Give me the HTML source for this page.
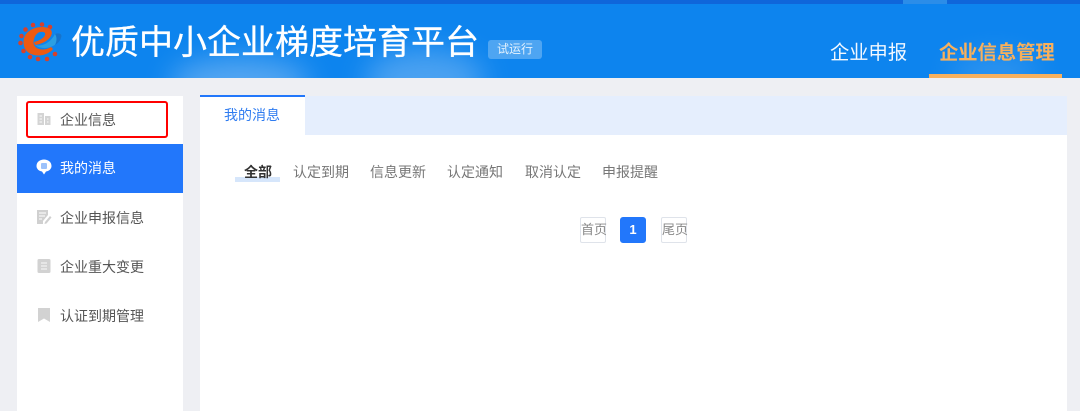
<!DOCTYPE html>
<html lang="zh">
<head>
<meta charset="utf-8">
<title>优质中小企业梯度培育平台</title>
<style>
html,body{margin:0;padding:0}
body{width:1080px;height:411px;position:relative;overflow:hidden;background:#eeeff3;font-family:"Liberation Sans","Noto Sans CJK SC",sans-serif;color:#555}
#root{position:absolute;left:0;top:0;width:1080px;height:411px;filter:blur(.35px)}
.a{position:absolute;white-space:nowrap}
#hd{position:absolute;left:0;top:0;width:1080px;height:78px;background:#0d84ee;overflow:hidden}
#top{position:absolute;left:0;top:0;width:1080px;height:4px;background:#0f66da}
.cloud{position:absolute;border-radius:50%;background:#6db2f3;filter:blur(14px)}
.side{font-size:14px;line-height:20px;left:60px;color:#555}
.ic{position:absolute;left:36px}
.tab{font-size:14px;line-height:20px;top:162px;color:#777}
.pg{position:absolute;top:217px;width:26px;height:26px;box-sizing:border-box;border:1px solid #dfe3ea;border-radius:2px;font-size:13px;line-height:24px;text-align:center;color:#888;background:#fff;white-space:nowrap}
</style>
</head>
<body>
<div id="root">
<div id="hd">
  <div class="cloud" style="left:170px;top:58px;width:140px;height:50px;opacity:.75"></div>
  <div class="cloud" style="left:365px;top:50px;width:120px;height:60px;opacity:.65"></div>
  <div class="cloud" style="left:950px;top:55px;width:90px;height:36px;opacity:.35"></div>
  <div id="top"></div>
  <div class="a" style="left:903px;top:0;width:44px;height:4px;background:#2b8de8"></div>
  <svg class="a" style="left:18px;top:22px" width="46" height="40" viewBox="0 0 46 40">
    <g fill="#d6412b">
      <circle cx="15" cy="3" r="2.300"/><circle cx="24" cy="2.500" r="2.300"/><circle cx="32" cy="5" r="2.300"/><circle cx="7.500" cy="7.500" r="2.300"/>
      <circle cx="3.500" cy="14" r="2.300"/><circle cx="2.500" cy="21" r="2.300"/><circle cx="5.500" cy="29" r="2.300"/><circle cx="12" cy="35" r="2.300"/>
      <circle cx="20" cy="37" r="2.300"/><circle cx="29" cy="37" r="2.300"/><circle cx="37" cy="32" r="2.300"/>
    </g>
    <path d="M5.500 20C5.500 11 14 5 24 5C31 5 36 8 33 14C30 19 24 22 17 23L16 20C21 19 26 16 27 13C28 10 25 9.500 22 10C18 11 15.500 16 15.500 21C16 27 25 30 33 25L35 27C27 37 5.500 36 5.500 20Z" fill="#ec5a12"/>
    <path d="M17 23C25 25 33 20 37 12C41 10 45 12 43 16C39 24 27 30 17 23Z" fill="#2b9fe2"/>
    <path d="M37 12C41 10 45 12 43 16C42 19 40 21 37 23C39 19 39 15 37 12Z" fill="#1673cc"/>
  </svg>
  <div class="a" style="left:71px;top:19px;font-size:34px;line-height:48px;color:#fff;font-weight:400;-webkit-text-stroke:.3px #fff">优质中小企业梯度培育平台</div>
  <div class="a" style="left:488px;top:40px;width:54px;height:19px;background:#4ea5f2;border-radius:3px;font-size:12px;line-height:19px;text-align:center;color:#e3f1fd">试运行</div>
  <div class="a" style="left:830px;top:40px;font-size:19.300px;line-height:28px;color:#f2f8ff">企业申报</div>
  <div class="a" style="left:939px;top:40px;font-size:19.300px;line-height:28px;color:#f8b05c;font-weight:700">企业信息管理</div>
  <div class="a" style="left:929px;top:74px;width:133px;height:4px;background:#f8b05c"></div>
</div>

<div class="a" style="left:17px;top:96px;width:166px;height:315px;background:#fff"></div>
<div class="a" style="left:17px;top:144px;width:166px;height:49px;background:#2277fb"></div>
<div class="a" style="left:26px;top:101px;width:142px;height:37px;box-sizing:border-box;border:2.500px solid #f00;border-radius:3px"></div>

<svg class="ic" style="top:112px" width="16" height="14" viewBox="0 0 16 14"><path d="M1.500 1H8V13H1.500ZM9 4H14.500V13H9Z" fill="#d4d4d4"/><path d="M3.500 4H6M3.500 7H6M3.500 10H6M11 7H12.500M11 10H12.500" stroke="#f3f3f3" stroke-width="1.200"/></svg>
<div class="a side" style="top:110px">企业信息</div>

<svg class="ic" style="top:159px" width="16" height="16" viewBox="0 0 16 16"><path d="M8 .500C12 .500 15.500 3 15.500 7C15.500 10 13 12 10 12.500L8 15.500L6 12.500C3 12 .500 10 .500 7C.500 3 4 .500 8 .500Z" fill="#fff"/><rect x="5" y="4" width="6" height="6" rx="1" fill="#9cc2fb"/></svg>
<div class="a side" style="top:158px;color:#fff">我的消息</div>

<svg class="ic" style="top:209px" width="16" height="16" viewBox="0 0 16 16"><path d="M1 1H12V6L7 12V15H1Z" fill="#d0d0d0"/><path d="M3 4H10M3 7H9M3 10H6" stroke="#f5f5f5" stroke-width="1.200"/><path d="M9 13L14 7L15.500 8.500L10.500 14.500L8.500 15Z" fill="#d0d0d0"/></svg>
<div class="a side" style="top:208px">企业申报信息</div>

<svg class="ic" style="top:259px" width="16" height="14" viewBox="0 0 16 14"><rect x="1.500" y="0" width="13" height="14" rx="1.500" fill="#d2d2d2"/><path d="M5 4H11M5 7H11M5 10H11" stroke="#f3f3f3" stroke-width="1.200"/></svg>
<div class="a side" style="top:257px">企业重大变更</div>

<svg class="ic" style="top:308px" width="16" height="14" viewBox="0 0 16 14"><path d="M2 0H14V14L8 10.500L2 14Z" fill="#d2d2d2"/></svg>
<div class="a side" style="top:306px">认证到期管理</div>

<div class="a" style="left:200px;top:96px;width:867px;height:315px;background:#fff"></div>
<div class="a" style="left:305px;top:96px;width:762px;height:39px;background:#e5eefd"></div>
<div class="a" style="left:200px;top:95px;width:105px;height:2px;background:#2277fb"></div>
<div class="a" style="left:224px;top:105px;font-size:14px;line-height:20px;color:#2f7cf0">我的消息</div>

<div class="a" style="left:235px;top:177px;width:45px;height:5px;background:#d6e6fb"></div>
<div class="a tab" style="left:244px;color:#333;font-weight:700">全部</div>
<div class="a tab" style="left:293px">认定到期</div>
<div class="a tab" style="left:370px">信息更新</div>
<div class="a tab" style="left:447px">认定通知</div>
<div class="a tab" style="left:525px">取消认定</div>
<div class="a tab" style="left:602px">申报提醒</div>

<div class="pg" style="left:580px">首页</div>
<div class="pg" style="left:620px;background:#2277fb;border-color:#2277fb;color:#fff;border-radius:3px;font-weight:700">1</div>
<div class="pg" style="left:661px">尾页</div>
</div>
</body>
</html>
